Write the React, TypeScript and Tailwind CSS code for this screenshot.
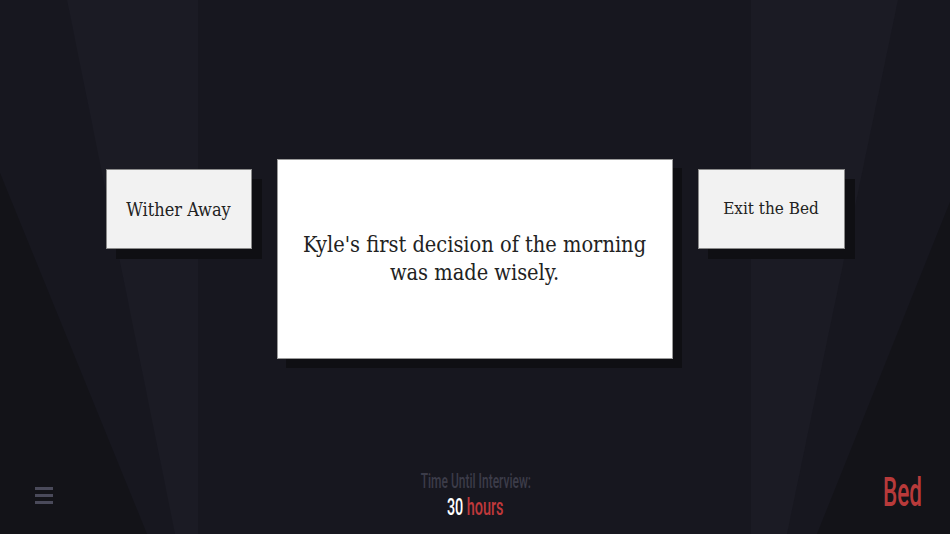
import React from "react";

const serif = { fontFamily: '"DejaVu Serif Condensed", "DejaVu Serif", "Liberation Serif", serif' };
const narrow = { fontFamily: 'Roboto, "Liberation Sans", sans-serif' };

function Backdrop() {
  return (
    <svg
      className="absolute inset-0 h-full w-full"
      viewBox="0 0 950 534"
      preserveAspectRatio="none"
      aria-hidden="true"
    >
      <polygon points="67,0 198,0 198,534 175,534" fill="#1b1b24" />
      <polygon points="751,0 898,0 787,534 751,534" fill="#1b1b24" />
      <polygon points="0,173 147,534 0,534" fill="#131318" />
      <polygon points="950,202 950,534 817,534" fill="#131318" />
    </svg>
  );
}

export default function App() {
  return (
    <div className="relative h-[534px] w-full overflow-hidden bg-[#17171f]">
      <Backdrop />
      <div className="relative flex h-full flex-col">
        <div className="flex flex-row items-start justify-center gap-[25px] pt-[159px]">
          <div
            className="mt-[10px] flex h-[80px] w-[146px] items-center justify-center border border-[#8a8a8a] bg-[#f2f2f2] text-[18px] text-[#222] shadow-[10px_10px_0_#0f0f13]"
            style={serif}
          >
            Wither Away
          </div>
          <div
            className="flex h-[200px] w-[396px] items-center justify-center border border-[#9a9a9a] bg-white px-4 text-center text-[21.6px] leading-[28px] text-[#222] shadow-[9px_9px_0_#0f0f13]"
            style={serif}
          >
            <p>
              Kyle's first decision of the morning
              <br />
              was made wisely.
            </p>
          </div>
          <div
            className="mt-[10px] flex h-[80px] w-[147px] items-center justify-center border border-[#8a8a8a] bg-[#f2f2f2] text-[17px] text-[#222] shadow-[10px_10px_0_#0f0f13]"
            style={serif}
          >
            Exit the Bed
          </div>
        </div>

        <div className="mt-auto grid h-[70px] grid-cols-[1fr_auto_1fr] items-start px-[28px]">
          <div className="ml-[7px] mt-[23px] flex w-[18px] flex-col gap-[4px]">
            <span className="block h-[3px] w-full bg-[#4a4a5a]" />
            <span className="block h-[3px] w-full bg-[#4a4a5a]" />
            <span className="block h-[3px] w-full bg-[#4a4a5a]" />
          </div>

          <div className="ml-[1px] mt-[5px] flex flex-col items-center" style={narrow}>
            <div className="origin-center scale-x-[0.6] whitespace-nowrap text-[20px] font-medium leading-[24px] text-[#3c3c49]">
              Time Until Interview:
            </div>
            <div className="origin-center scale-x-[0.6] whitespace-nowrap text-[24px] font-medium leading-[28px]">
              <span className="text-white">30</span>{" "}
              <span className="text-[#c0393b]">hours</span>
            </div>
          </div>

          <div
            className="mt-[6px] origin-right scale-x-[0.55] justify-self-end text-[41px] font-medium leading-[44px] text-[#b83a3a]"
            style={narrow}
          >
            Bed
          </div>
        </div>
      </div>
    </div>
  );
}
